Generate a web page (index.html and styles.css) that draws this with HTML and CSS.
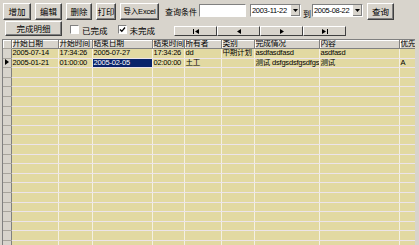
FILE: index.html
```html
<!DOCTYPE html>
<html lang="zh">
<head>
  <meta charset="UTF-8" />
  <title>计划管理</title>
  <link rel="stylesheet" href="styles.css">
</head>
<body>
  <div class="bar barTop">
    <button class="btn w-add">增加</button>
    <button class="btn w-edit">编辑</button>
    <button class="btn w-del">删除</button>
    <button class="btn w-print">打印</button>
    <button class="btn w-excel">导入Excel</button>
    <span class="label">查询条件</span>
    <span class="textBox"></span>
    <span class="combo combo1"><span class="comboText">2003-11-22</span><span class="comboArrow"><svg width="5" height="3" viewBox="0 0 5 3"><path d="M0 0H5L2.5 3Z" fill="#000"/></svg></span></span>
    <span class="to">到</span>
    <span class="combo"><span class="comboText">2005-08-22</span><span class="comboArrow"><svg width="5" height="3" viewBox="0 0 5 3"><path d="M0 0H5L2.5 3Z" fill="#000"/></svg></span></span>
    <button class="btn w-query">查询</button>
  </div>

  <div class="bar barSecond">
    <button class="btn w-detail">完成明细</button>
    <label class="check"><span class="box"></span>已完成</label>
    <label class="check check2"><span class="box"><svg width="7" height="7" viewBox="0 0 7 7"><path d="M1 3.5L2.8 5.3L6 1.5" fill="none" stroke="#000" stroke-width="1.3"/></svg></span>未完成</label>
    <div class="nav">
      <span class="navBtn"><svg width="6" height="5" viewBox="0 0 6 5"><path d="M0 0H1V5H0Z M6 0V5L2 2.5Z" fill="#000"/></svg></span>
      <span class="navBtn"><svg width="4" height="5" viewBox="0 0 4 5"><path d="M4 0V5L0 2.5Z" fill="#000"/></svg></span>
      <span class="navBtn"><svg width="4" height="5" viewBox="0 0 4 5"><path d="M0 0V5L4 2.5Z" fill="#000"/></svg></span>
      <span class="navBtn"><svg width="6" height="5" viewBox="0 0 6 5"><path d="M0 0V5L4 2.5Z M5 0H6V5H5Z" fill="#000"/></svg></span>
    </div>
  </div>

  <div class="grid">
    <table id="table">
      <colgroup>
        <col style="width:8px"><col style="width:47px"><col style="width:34px"><col style="width:60px">
        <col style="width:32px"><col style="width:37px"><col style="width:33px"><col style="width:65px">
        <col style="width:80px"><col style="width:17px">
      </colgroup>
      <thead>
        <tr>
          <th class="ind"></th>
          <th>开始日期</th><th>开始时间</th><th>结束日期</th><th>结束时间</th>
          <th>所有者</th><th>类别</th><th>完成情况</th><th>内容</th><th>优先级</th>
        </tr>
      </thead>
      <tbody id="rows">
        <tr>
          <td class="ind"></td>
          <td>2005-07-14</td><td>17:34:26</td><td>2005-07-27</td><td>17:34:26</td>
          <td>dd</td><td>中期计划</td><td>asdfasdfasd</td><td>asdfasd</td><td></td>
        </tr>
        <tr>
          <td class="ind"><svg width="4" height="6" viewBox="0 0 4 6"><path d="M0 0V6L4 3Z" fill="#000"/></svg></td>
          <td>2005-01-21</td><td>01:00:00</td><td class="sel">2005-02-05</td><td>02:00:00</td>
          <td>王工</td><td></td><td>测试 dsfgsdsfgsdfgs</td><td>测试</td><td>A</td>
        </tr>
      </tbody>
    </table>
  </div>

  <script>
    // empty rows to fill the grid
    const rows = document.getElementById("rows");
    for (let i = 0; i < 19; i++) {
      const tr = document.createElement("tr");
      for (let c = 0; c < 10; c++) {
        const td = document.createElement("td");
        if (c === 0) td.className = "ind";
        tr.appendChild(td);
      }
      rows.appendChild(tr);
    }
  </script>
</body>
</html>
```

FILE: styles.css
```css
html, body {
  margin: 0;
  padding: 0;
  background: #d8d4cc;
  height: 245px;
  overflow: hidden;
  font-family: 'Liberation Sans', 'Noto Sans CJK SC', sans-serif;
  font-size: 9px;
  color: #000;
}

.bar {
  display: flex;
  align-items: flex-start;
}

.barTop {
  height: 20px;
  padding: 3px 0 0 3px;
  box-sizing: border-box;
}

.barSecond {
  height: 19px;
  padding: 1px 0 0 5px;
  box-sizing: border-box;
}

.btn {
  font: inherit;
  font-size: 8.5px;
  height: 17px;
  padding: 0;
  margin: 0 4px 0 0;
  background: #d8d4cc;
  border: 1px solid;
  border-color: #fff #404040 #404040 #fff;
  box-shadow: inset -1px -1px 0 #808080;
  color: #000;
  line-height: 14px;
  white-space: nowrap;
}

.w-add { width: 28px; }
.w-edit { width: 27px; }
.w-del { width: 26px; }
.w-print { width: 20px; }
.w-excel { width: 39px; margin-right: 6px; font-size: 7.5px; letter-spacing: -0.2px; }
.w-query { width: 27px; margin-left: 4px; }
.w-detail { width: 57px; height: 15px; line-height: 12px; margin-right: 8px; }

.label {
  width: 33px;
  margin-top: 3px;
  font-size: 8px;
  white-space: nowrap;
}

.textBox {
  width: 47px;
  height: 13px;
  margin: 1px 0 0 1px;
  background: #fff;
  border: 1px solid;
  border-color: #808080 #fff #fff #808080;
  box-sizing: border-box;
}

.combo {
  display: flex;
  width: 51px;
  height: 13px;
  margin-top: 1px;
  background: #fff;
  border: 1px solid;
  border-color: #808080 #fff #fff #808080;
  box-sizing: border-box;
}

.combo1 { margin-left: 4px; }

.comboText {
  flex: 1;
  font-size: 7.5px;
  line-height: 11px;
  padding-left: 1px;
  letter-spacing: -0.3px;
  white-space: nowrap;
  overflow: hidden;
}

.comboArrow {
  width: 9px;
  display: flex;
  align-items: center;
  justify-content: center;
  background: #d8d4cc;
  border-left: 1px solid #fff;
  box-shadow: inset -1px -1px 0 #808080;
}

.to {
  width: 8px;
  margin: 5px 1px 0 2px;
  font-size: 8px;
}

.check {
  display: flex;
  align-items: center;
  height: 13px;
  margin-top: 2px;
  gap: 3px;
  font-size: 8.5px;
}

.check2 { margin-left: 10px; }

.box {
  width: 7px;
  height: 7px;
  background: #fff;
  border: 1px solid;
  border-color: #808080 #fff #fff #808080;
  display: flex;
  align-items: center;
  justify-content: center;
}

.nav {
  display: flex;
  margin: 5px 0 0 19px;
}

.navBtn {
  width: 43px;
  height: 10px;
  display: flex;
  align-items: center;
  justify-content: center;
  background: #d8d4cc;
  border: 1px solid;
  border-color: #fff #404040 #404040 #fff;
  box-sizing: border-box;
}

.grid {
  margin-left: 2px;
  width: 413px;
  height: 206px;
  overflow: hidden;
  border-top: 1px solid #808080;
  border-left: 1px solid #808080;
  box-sizing: border-box;
}

table {
  border-collapse: collapse;
  table-layout: fixed;
  width: 412px;
}

th, td {
  padding: 0 0 0 1px;
  white-space: nowrap;
  overflow: hidden;
  text-align: left;
  font-weight: normal;
}

th {
  height: 8px;
  font-size: 7.8px;
  line-height: 8px;
  background: #d8d4cc;
  border-right: 1px solid #808080;
  border-bottom: 1px solid #808080;
  box-shadow: inset 1px 1px 0 #fff;
  letter-spacing: -0.2px;
}

td {
  height: 8.6px;
  font-size: 7.5px;
  line-height: 8px;
  background: #e2d9a2;
  border-right: 1px solid #f4f0e2;
  border-bottom: 1px solid #ece4ea;
  letter-spacing: -0.2px;
}

td.ind, th.ind {
  background: #d8d4cc;
  border-right: 1px solid #808080;
  border-bottom: 1px solid #a8a49c;
  padding: 0;
  text-align: center;
}

td.sel {
  background: #0a246a;
  color: #fff;
}
```
